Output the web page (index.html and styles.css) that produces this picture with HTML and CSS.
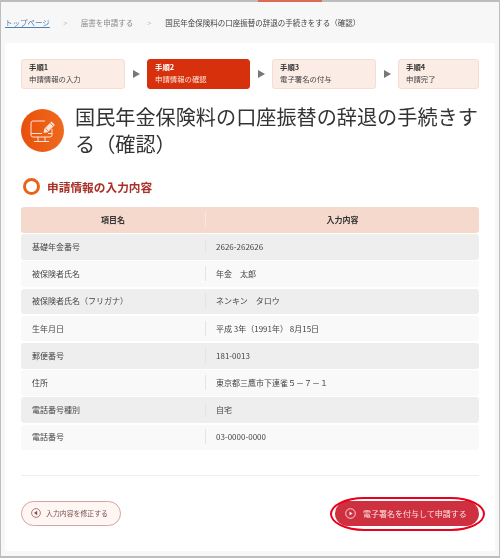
FILE: index.html
```html
<!DOCTYPE html>
<html lang="ja">
  <head>
    <meta charset="UTF-8" />
    <meta name="viewport" content="width=device-width, initial-scale=1.0" />
    <title>申請情報の確認</title>
    <link rel="stylesheet" href="styles.css">
  </head>
  <body>
    <div class="frame">
      <div class="top-accent"></div>
      <div class="breadcrumb">
        <a class="crumb-link" href="#">トップページ</a>
        <span class="crumb-sep">&gt;</span>
        <span class="crumb-mid">届書を申請する</span>
        <span class="crumb-sep">&gt;</span>
        <span>国民年金保険料の口座振替の辞退の手続きをする（確認）</span>
      </div>

      <div class="card">
        <div class="steps">
          <div class="step step-1"><b>手順1</b><span>申請情報の入力</span></div>
          <div class="arrow"></div>
          <div class="step step-2 active"><b>手順2</b><span>申請情報の確認</span></div>
          <div class="arrow"></div>
          <div class="step step-3"><b>手順3</b><span>電子署名の付与</span></div>
          <div class="arrow"></div>
          <div class="step step-4"><b>手順4</b><span>申請完了</span></div>
        </div>

        <div class="title-row">
          <div class="title-icon">
            <svg width="43" height="43" viewBox="0 0 43 43" fill="none" stroke="#fbe3d6" stroke-width="1">
              <path d="M24 12H12a2 2 0 0 0-2 2v12a2 2 0 0 0 2 2h17a2 2 0 0 0 2-2v-6" />
              <path d="M10 24.5h11M27 24.5h4" />
              <path d="M17 28v4M24 28v4M13 32.5h15" />
              <path d="M22.5 24l.8-4.2 7.2-7.3 3.4 3.4-7.2 7.3z" fill="#fbe3d6" stroke="none" />
              <path d="M24.5 19.5l3 3M29 14l3.4 3.4" stroke="#e9560f" stroke-width="0.7" />
            </svg>
          </div>
          <h1 class="title">国民年金保険料の口座振替の辞退の手続きする（確認）</h1>
        </div>

        <h2 class="section-title">申請情報の入力内容</h2>

        <div class="table">
          <div class="row head"><div class="col-name">項目名</div><div class="col-value">入力内容</div></div>
          <div class="row"><div class="col-name">基礎年金番号</div><div class="col-value">2626-262626</div></div>
          <div class="row"><div class="col-name">被保険者氏名</div><div class="col-value">年金　太郎</div></div>
          <div class="row"><div class="col-name">被保険者氏名（フリガナ）</div><div class="col-value">ネンキン　タロウ</div></div>
          <div class="row"><div class="col-name">生年月日</div><div class="col-value">平成 3年（1991年） 8月15日</div></div>
          <div class="row"><div class="col-name">郵便番号</div><div class="col-value">181-0013</div></div>
          <div class="row"><div class="col-name">住所</div><div class="col-value">東京都三鷹市下連雀５－７－１</div></div>
          <div class="row"><div class="col-name">電話番号種別</div><div class="col-value">自宅</div></div>
          <div class="row"><div class="col-name">電話番号</div><div class="col-value">03-0000-0000</div></div>
        </div>

        <hr class="divider" />

        <div class="buttons">
          <a class="btn btn-back" href="#">
            <svg width="10" height="10" viewBox="0 0 10 10"><circle cx="5" cy="5" r="4.4" fill="none" stroke="#9c5a5a" stroke-width="0.8" /><path d="M6.2 2.8v4.4L3 5z" fill="#8c4a4a" /></svg>
            入力内容を修正する
          </a>
          <a class="btn btn-submit" href="#">
            <svg width="11" height="11" viewBox="0 0 11 11"><circle cx="5.5" cy="5.5" r="4.8" fill="none" stroke="#fbe9e9" stroke-width="0.9" /><path d="M4.5 3.6v3.8l3-1.9z" fill="#fbe9e9" /></svg>
            電子署名を付与して申請する
            <span class="callout"></span>
          </a>
        </div>
      </div>
    </div>
  </body>
</html>
```
FILE: styles.css
```css
* {
  box-sizing: border-box;
}
body {
  margin: 0;
  font-family: "Noto Sans CJK JP", "Noto Sans", sans-serif;
  color: #444;
}
.frame {
  position: relative;
  width: 500px;
  height: 558px;
  padding: 0 4px 5px 4px;
  background-color: #f7f7f7;
  border: 1px solid #bdbdbd;
  border-top-width: 2px;
  border-bottom-width: 2px;
  filter: blur(0.35px); /* the screenshot is soft */
}
.top-accent {
  position: absolute;
  top: -2px;
  left: 257px;
  width: 64px;
  height: 2px;
  background-color: #dd6a55;
}

/* breadcrumb */
.breadcrumb {
  height: 41px;
  padding-bottom: 1px;
  display: flex;
  align-items: center;
  font-size: 7.5px;
  color: #444;
}
.crumb-link {
  color: #4a7fb0;
}
.crumb-sep {
  width: 31px;
  text-align: center;
  color: #bbb;
}
.crumb-sep:nth-of-type(3) {
  width: 32px;
}
.crumb-mid {
  color: #888;
}

.card {
  height: 508px;
  padding: 16px;
  background-color: white;
  border-radius: 3px;
}

/* steps */
.steps {
  display: flex;
}
.step {
  height: 29.5px;
  padding: 0 7px 2px;
  display: flex;
  flex-direction: column;
  justify-content: center;
  font-size: 7.4px;
  line-height: 11.5px;
  color: #444;
  background-color: #fbece5;
  border: 1px solid #f6ddd0;
  border-radius: 3px;
}
.step b {
  color: #333;
}
.step-1,
.step-3 {
  width: 104px;
}
.step-2 {
  width: 103px;
}
.step-4 {
  width: 81px;
}
.step.active {
  color: #fbe3d6;
  background-color: #d6300c;
  border-color: #d6300c;
}
.step.active b {
  color: #fff;
}
.arrow {
  width: 22px;
  display: flex;
  justify-content: center;
  align-items: center;
}
.arrow::before {
  content: "";
  border-left: 7px solid #777;
  border-top: 4px solid transparent;
  border-bottom: 4px solid transparent;
}

/* page title */
.title-row {
  display: flex;
  align-items: center;
  gap: 11px;
  margin-top: 14px;
}
.title-icon {
  width: 43px;
  height: 43px;
  flex-shrink: 0;
  border-radius: 50%;
  background: linear-gradient(90deg, #e8500c, #ee6a1e);
}
.title-icon svg {
  display: block;
}
.title {
  margin: 0;
  padding-bottom: 1px;
  font-size: 20.15px;
  font-weight: normal;
  line-height: 27px;
  color: #333;
}

/* section heading */
.section-title {
  display: flex;
  align-items: center;
  gap: 7px;
  height: 18px;
  margin: 19.5px 0 12px 2px;
  font-size: 11.7px;
  font-weight: bold;
  color: #a8322a;
}
.section-title::before {
  content: "";
  box-sizing: border-box;
  width: 17px;
  height: 17px;
  border: 3.5px solid #e8641b;
  border-radius: 50%;
}

/* table */
.table {
  display: grid;
  gap: 1.5px;
}
.row {
  height: 25.7px;
  padding-bottom: 1px;
  display: flex;
  align-items: center;
  font-size: 8px;
  line-height: 15px;
  border-radius: 3px;
  background-color: #f9f9f9;
}
.row:nth-child(even) {
  background-color: #eee;
}
.row.head {
  font-weight: bold;
  color: #333;
  background-color: #f6d9cd;
}
.col-name {
  width: 184px;
  padding-left: 11px;
}
.col-value {
  flex: 1;
  padding-left: 10px;
  border-left: 1px solid #e4e4e4;
}
.head .col-name,
.head .col-value {
  padding-left: 0;
  text-align: center;
}
.head .col-value {
  border-left-color: #f9e8e0;
}

.divider {
  height: 1px;
  margin: 24.5px 0 25px;
  border: none;
  background-color: #eee;
}

/* buttons */
.buttons {
  display: flex;
  justify-content: space-between;
}
.btn {
  position: relative;
  height: 25px;
  display: flex;
  align-items: center;
  border-radius: 13px;
  text-decoration: none;
}
.btn-back {
  width: 100px;
  gap: 5px;
  padding-left: 9px;
  font-size: 6.9px;
  color: #7c5050;
  background-color: #fdf6f3;
  border: 1px solid #d8a3a3;
}
.btn-submit {
  width: 144px;
  gap: 7px;
  padding-left: 10px;
  font-size: 8px;
  color: #fbe3e3;
  background-color: #cf3040;
}
/* red marker drawn over the screenshot */
.callout {
  position: absolute;
  top: -4px;
  left: -5px;
  width: 155px;
  height: 34px;
  border: 2px solid #e8001c;
  border-radius: 34px / 17px;
}
```
